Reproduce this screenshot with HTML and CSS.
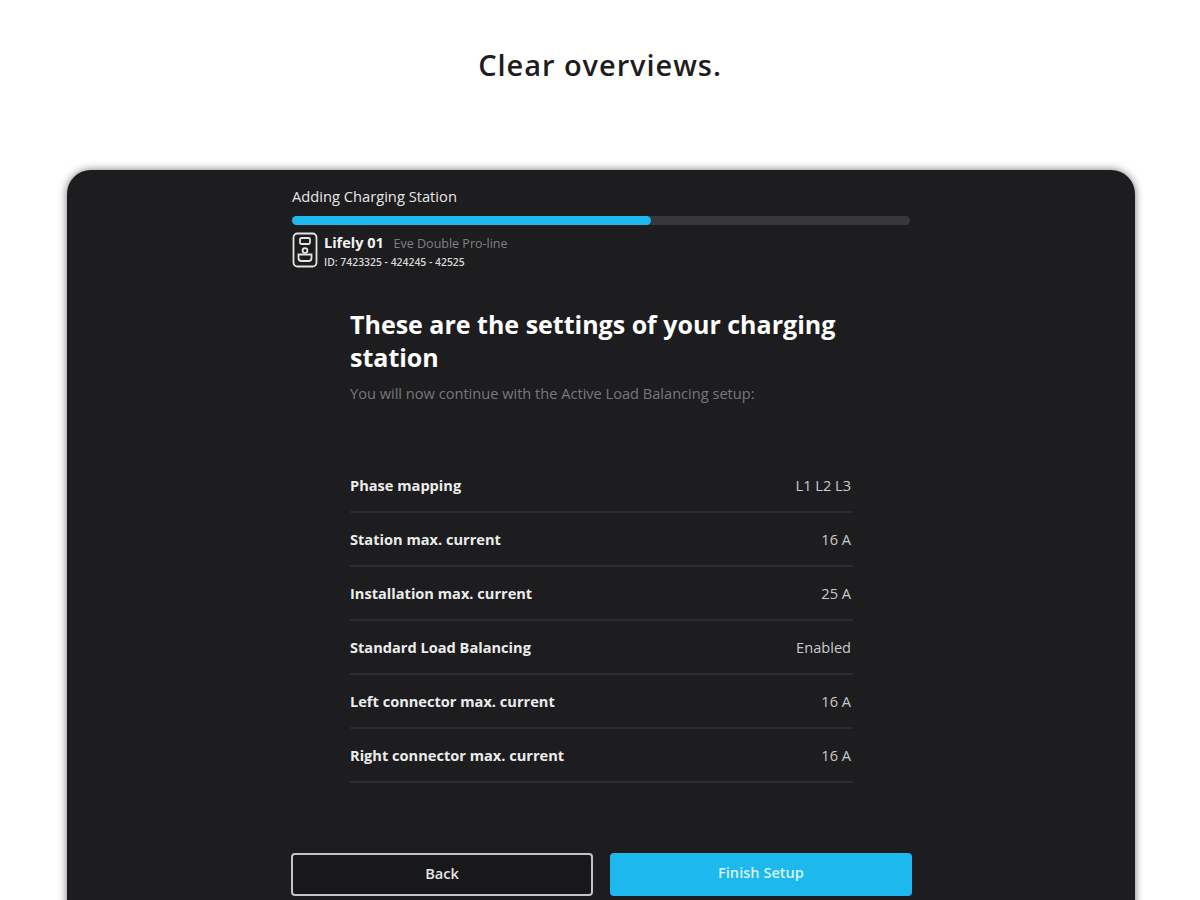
FILE: index.html
```html
<!DOCTYPE html>
<html lang="en">

<head>
    <meta charset="UTF-8">
    <title>Clear overviews</title>
    <link rel="stylesheet" href="styles.css">
</head>

<body>
    <h1 class="title">Clear overviews.</h1>
    <main class="panel">
        <div class="wizard">
            <div class="wizard-label">Adding Charging Station</div>
            <div class="progress"><div class="progress-fill"></div></div>
            <div class="station">
                <svg class="station-icon" width="26" height="36" viewBox="0 0 26 36" fill="none" stroke="#e4e4e4" stroke-width="1.8">
                    <rect x="1.5" y="1.5" width="23" height="33" rx="4"/>
                    <rect x="8" y="6" width="10" height="6" rx="1.5"/>
                    <circle cx="13" cy="18.5" r="2.4"/>
                    <path d="M6.5 22.5h13v3.5a3 3 0 0 1-3 3h-7a3 3 0 0 1-3-3z"/>
                </svg>
                <div class="station-info">
                    <div class="station-name">Lifely 01 <span class="station-model">Eve Double Pro-line</span></div>
                    <div class="station-id">ID: 7423325 - 424245 - 42525</div>
                </div>
            </div>

            <section class="summary">
                <h2 class="summary-title">These are the settings of your charging station</h2>
                <p class="summary-text">You will now continue with the Active Load Balancing setup:</p>
                <ul class="settings">
                    <li><b>Phase mapping</b><span>L1 L2 L3</span></li>
                    <li><b>Station max. current</b><span>16 A</span></li>
                    <li><b>Installation max. current</b><span>25 A</span></li>
                    <li><b>Standard Load Balancing</b><span>Enabled</span></li>
                    <li><b>Left connector max. current</b><span>16 A</span></li>
                    <li><b>Right connector max. current</b><span>16 A</span></li>
                </ul>
            </section>

            <div class="actions">
                <a class="btn btn-back" href="#">Back</a>
                <a class="btn btn-finish" href="#">Finish Setup</a>
            </div>
        </div>
    </main>
</body>

</html>
```

FILE: styles.css
```css
html,
body {
    margin: 0;
    padding: 0;
    width: 100%;
    height: 100%;
}

body {
    overflow: hidden;
    background: #fff;
    font-family: "Open Sans", sans-serif;
}

.title {
    margin: 0;
    padding-top: 45px;
    height: 125px;
    box-sizing: border-box;
    text-align: center;
    font-size: 29px;
    line-height: 40px;
    font-weight: 600;
    letter-spacing: 0.95px;
    color: #1d1d1f;
}

.panel {
    width: 1068px;
    height: 760px;
    margin-top: 45px;
    margin-left: 67px;
    padding-top: 16px;
    box-sizing: border-box;
    background: #1d1d1f;
    border-radius: 24px 24px 0 0;
    box-shadow: 0 0 8px rgba(0, 0, 0, 0.55);
}

.wizard {
    width: 620px;
    margin-left: 225px;
}

.wizard-label {
    font-size: 14.7px;
    line-height: 20px;
    color: #e6e6e6;
}

.progress {
    width: 618px;
    height: 9px;
    margin-top: 10px;
    background: #37383b;
    border-radius: 5px;
}

.progress-fill {
    width: 359px;
    height: 100%;
    background: #1cb8ee;
    border-radius: 5px;
}

.station {
    display: flex;
    align-items: flex-start;
    gap: 6px;
    margin-top: 7px;
}

.station-info {
    padding-top: 1px;
}

.station-name {
    font-size: 14.5px;
    line-height: 20px;
    font-weight: 700;
    color: #f2f2f2;
}

.station-model {
    margin-left: 6px;
    font-size: 12.5px;
    font-weight: 400;
    color: #808184;
}

.station-id {
    margin-top: 2px;
    font-size: 10.4px;
    line-height: 12px;
    font-weight: 600;
    color: #d8d8d8;
}

.summary {
    width: 503px;
    margin-left: 58px;
    margin-top: 40px;
}

.summary-title {
    margin: 0;
    font-size: 25px;
    line-height: 33px;
    font-weight: 700;
    color: #fff;
}

.summary-text {
    margin: 9px 0 0;
    font-size: 14.6px;
    line-height: 20px;
    color: #77787b;
}

.settings {
    margin: 56px 0 0;
    padding: 0;
    list-style: none;
}

.settings li {
    display: flex;
    justify-content: space-between;
    align-items: center;
    height: 54px;
    box-sizing: border-box;
    border-bottom: 2px solid #2b2c2e;
    font-size: 14.6px;
    color: #c9c9c9;
}

.settings span {
    padding-right: 2px;
}

.settings b {
    font-weight: 700;
    color: #ececec;
}

.actions {
    display: flex;
    gap: 16px;
    margin-top: 70px;
}

.btn {
    display: block;
    width: 302px;
    height: 43px;
    box-sizing: border-box;
    border-radius: 4px;
    text-align: center;
    text-decoration: none;
    font-size: 14.6px;
    line-height: 37px;
    font-weight: 600;
}

.btn-back {
    margin-left: -1px;
    margin-right: 1px;
    border: 2px solid #c4c4c4;
    background: #18181a;
    color: #e6e6e6;
}

.btn-finish {
    background: #1cb8ee;
    color: #d8f3fd;
    line-height: 39px;
}
```
